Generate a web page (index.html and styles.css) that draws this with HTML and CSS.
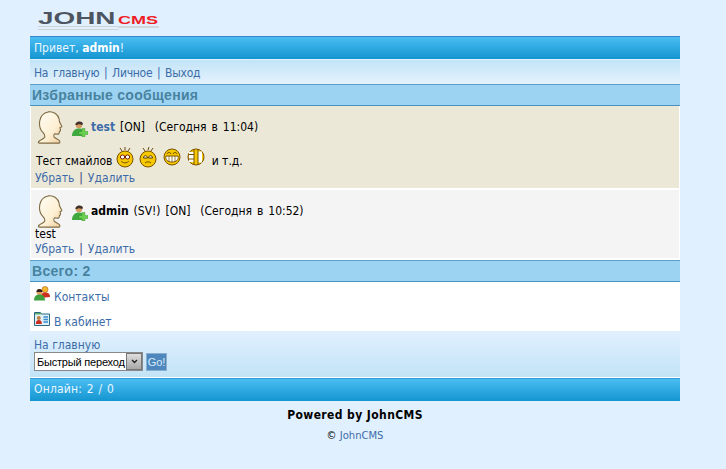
FILE: index.html
```html
<!DOCTYPE html>
<html lang="ru">

<head>
  <meta charset="UTF-8">
  <title>Избранные сообщения</title>
  <link rel="stylesheet" href="styles.css">
</head>

<body>
  <!-- shared icons -->
  <svg class="defs">
    <defs>
      <linearGradient id="skin" x1="0" y1="0" x2="1" y2="1">
        <stop offset="0" stop-color="#fffdf4"/>
        <stop offset="0.6" stop-color="#fdf0d4"/>
        <stop offset="1" stop-color="#f0c998"/>
      </linearGradient>
    </defs>
    <symbol id="avatar" viewBox="0 0 28 36">
      <path d="M12 1c6-1 11 3 12 8 0 2 0 3 1 4l2 4c0 1-1 1-2 1 0 2 1 3 0 4-1 0-1 1-1 2 0 2-3 1-5 1-1 1-1 3 0 4l5 3c1 1 1 3 0 3H3c-2 0-2-1-1-2 2-2 4-2 6-4 1-2 0-4-2-6C3 20 2 15 3 10c1-5 4-8 9-9z" fill="url(#skin)" stroke="#7d6a42" stroke-width="1.200"/>
    </symbol>
    <symbol id="user-on" viewBox="0 0 17 17">
      <circle cx="8" cy="5" r="3.300" fill="#d49a62"/>
      <path d="M4.500 5c-.5-4 7-5 7.500-1l-1 1c-2-1-4-1-5 0z" fill="#40302c"/>
      <path d="M1 16c0-5 3-7.500 7-7.500s6 2 6 7.500z" fill="#3fa83f"/>
      <path d="M11 8.500h3v3h3v3h-3v2.500h-3v-2.500H8v-3h3z" fill="#6dcf4e" stroke="#2f8f30" stroke-width=".4"/>
    </symbol>
  </svg>

  <div class="page">
    <div class="logo">
      <span class="logo-john">JOHN</span>
      <span class="logo-cms">CMS</span>
    </div>

    <div class="header">Привет, <b>admin</b>!</div>
    <div class="tmn">
      <a href="#">На главную</a> | <a href="#">Личное</a> | <a href="#">Выход</a>
    </div>

    <div class="phdr">Избранные сообщения</div>

    <div class="post post-odd">
      <div class="post-head">
        <svg class="avatar"><use href="#avatar"/></svg>
        <svg class="status"><use href="#user-on"/></svg>
        <span><a class="nick" href="#">test</a> [ON] &nbsp;(Сегодня в 11:04)</span>
      </div>
      <div class="post-text post-text-smile">
        Тест смайлов
        <svg class="smile" viewBox="0 0 18 22">
          <path d="M6 5L4 2M9 4V1M12 5l2-3" stroke="#6b4a10" fill="none"/>
          <circle cx="9" cy="13" r="8" fill="#f5c800" stroke="#7a5200"/>
          <ellipse cx="6.500" cy="11" rx="2.200" ry="2" fill="#fff" stroke="#7a1a1a"/>
          <ellipse cx="11.500" cy="11" rx="2.200" ry="2" fill="#fff" stroke="#7a1a1a"/>
          <path d="M5 15c2 2.500 6 2.500 8 0" stroke="#7a5200" fill="none"/>
        </svg>
        <svg class="smile" viewBox="0 0 18 22">
          <path d="M6 5L4 2M9 4l1-3M12 5l2-3" stroke="#6b4a10" fill="none"/>
          <circle cx="9" cy="13" r="8" fill="#f5c800" stroke="#7a5200"/>
          <path d="M4.500 12c0-3 4-3 4 0zM9.500 12c0-3 4-3 4 0z" stroke="#5a3a00" fill="#fff"/>
          <path d="M6 17c1.500-1.500 4.500-1.500 6 0" stroke="#7a5200" fill="none"/>
        </svg>
        <svg class="smile smile-round" viewBox="0 0 18 18">
          <circle cx="9" cy="9" r="8" fill="#f5c800" stroke="#7a5200"/>
          <path d="M4 6c1-2 3-2 4 0M10 6c1-2 3-2 4 0" stroke="#5a3a00" fill="none"/>
          <path d="M3 8h12c1 4-2 6-6 6s-7-2-6-6z" fill="#fff" stroke="#7a5200"/>
          <path d="M6 8v6M9 8v6M12 8v6" stroke="#7a5200" stroke-width=".7"/>
        </svg>
        <svg class="smile smile-round" viewBox="0 0 18 18">
          <circle cx="9" cy="9" r="8" fill="#f5c800" stroke="#7a5200"/>
          <path d="M2 4h5v10H2zM11 3.500h4v11h-4z" fill="#fff"/>
          <path d="M7 1.500v15M11 1.500v15M2 6.500h5M2 11h5" stroke="#7a5200" fill="none"/>
        </svg>
        и т.д.
      </div>
      <div class="post-links"><a href="#">Убрать</a> | <a href="#">Удалить</a></div>
    </div>

    <div class="post post-even">
      <div class="post-head">
        <svg class="avatar"><use href="#avatar"/></svg>
        <svg class="status"><use href="#user-on"/></svg>
        <span><b>admin</b> (SV!) [ON] &nbsp;(Сегодня в 10:52)</span>
      </div>
      <div class="post-text">test</div>
      <div class="post-links"><a href="#">Убрать</a> | <a href="#">Удалить</a></div>
    </div>

    <div class="phdr">Всего: 2</div>

    <div class="menu">
      <div class="menu-row">
        <svg class="menu-icon" viewBox="0 0 16 16">
          <circle cx="11" cy="3.500" r="3" fill="#f5b830" stroke="#a06010" stroke-width=".6"/>
          <path d="M7 12c0-4 1-5.500 4-5.500s5 1 5 4.500z" fill="#d03020"/>
          <circle cx="5.500" cy="6" r="3" fill="#e0a060"/>
          <path d="M2.500 6c-.5-4 6-4 6 0z" fill="#302020"/>
          <path d="M0 14.500c0-4 2-6 5.500-6s5.500 2 5.500 6z" fill="#40a040"/>
        </svg>
        <a href="#">Контакты</a>
      </div>
      <div class="menu-row">
        <svg class="menu-icon" viewBox="0 0 16 16">
          <path d="M.5 1.500h6l1 1.500h8v11.500H.5z" fill="#dff0f8" stroke="#2a6a80"/>
          <path d="M1 2h6v1.500H1z" fill="#60b060"/>
          <circle cx="4.800" cy="7" r="2" fill="#c08040"/>
          <path d="M1.800 13c0-3 1-4 3-4s3 1 3 4z" fill="#c83020"/>
          <path d="M9.500 6h4.500M9.500 8.500h4.500M9.500 11h4.500" stroke="#3a8ad0" stroke-width="1.400"/>
        </svg>
        <a href="#">В кабинет</a>
      </div>
    </div>

    <div class="bottom">
      <a href="#">На главную</a>
      <form class="jump">
        <div class="jump-select">
          <span class="jump-value">Быстрый переход</span>
          <span class="jump-arrow">
            <svg viewBox="0 0 7 5" class="jump-chevron"><path d="M1 1l2.500 2.500L6 1" fill="none" stroke="#222" stroke-width="1.400"/></svg>
          </span>
        </div>
        <button class="jump-go" type="button">Go!</button>
      </form>
    </div>

    <div class="footer">Онлайн: 2 / 0</div>

    <div class="powered">Powered by JohnCMS</div>
    <div class="copy">© <a href="#">JohnCMS</a></div>
  </div>
</body>

</html>
```

FILE: styles.css
```css
body {
  margin: 0;
  background-color: #e1f0fe;
  font-family: "DejaVu Sans Condensed", "DejaVu Sans", sans-serif;
  font-stretch: condensed;
  font-size: 12px;
  color: #000;
}

a {
  color: #3c6ca8;
  text-decoration: none;
}

.defs {
  display: block;
  width: 0;
  height: 0;
}

.page {
  width: 650px;
  margin-left: 30px;
}

.logo {
  height: 36px;
  padding: 10px 0 0 8px;
  box-sizing: border-box;
  display: flex;
  font-family: "Liberation Sans", Arial, sans-serif;
  font-stretch: normal;
  font-weight: bold;
}

.logo-john,
.logo-cms {
  display: inline-block;
  transform-origin: left top;
  transform: scaleX(1.64);
}

.logo-john {
  width: 49px;
  height: 16px;
  color: #4d5560;
  font-size: 17px;
  line-height: 17px;
  border-bottom: 4px double #cfd2d5;
}

.logo-cms {
  width: 25px;
  height: 16px;
  margin-left: 31px;
  color: #ee1c25;
  font-size: 11px;
  line-height: 20px;
  border-bottom: 2px solid #d3d6d8;
}

.header,
.footer {
  height: 22px;
  line-height: 23px;
  padding-left: 4px;
  color: #eaf6ff;
  background: linear-gradient(#4abdf2, #1495d0);
  border-top: 1px solid #3a85c8;
}

.header b {
  color: #fff;
}

.footer {
  line-height: 21px;
  word-spacing: 1px;
  letter-spacing: 0.2px;
  border-top-color: #2f9fdc;
}

.tmn {
  height: 24px;
  line-height: 26px;
  padding-left: 4px;
  margin-top: 1px;
  background: linear-gradient(#c2e4f7, #e4f2fd);
  color: #3c6ca8;
  word-spacing: 1.500px;
  letter-spacing: -0.25px;
}

.phdr {
  height: 20px;
  line-height: 20px;
  padding-left: 2px;
  background-color: #9dd3f2;
  border-top: 1px solid #5d9ec8;
  border-bottom: 1px solid #4a90c0;
  color: #47829f;
  font-family: "Liberation Sans", Arial, sans-serif;
  font-stretch: normal;
  font-size: 14px;
  letter-spacing: 0.3px;
  font-weight: bold;
}

.post {
  padding-left: 5px;
  border-left: 1px solid #fff;
  border-right: 1px solid #fff;
  border-bottom: 2px solid #fff;
}

.post-odd {
  height: 82px;
  background-color: #ece8d8;
}

.post-even {
  height: 68px;
  background-color: #f4f4f4;
}

.post-even .post-head {
  margin-bottom: -3px;
}

.post-head {
  display: flex;
  align-items: center;
  height: 38px;
  padding-top: 2px;
  word-spacing: 1.500px;
}

.avatar {
  width: 26px;
  height: 33px;
  margin: 0 8px 0 1px;
  flex: none;
}

.status {
  width: 17px;
  height: 17px;
  margin-right: 3px;
  margin-top: 3px;
  flex: none;
}

.nick {
  font-weight: bold;
}

.post-text {
  height: 15px;
  line-height: 15px;
  margin-left: -1px;
}

.post-text-smile {
  height: 25px;
  line-height: 28px;
  margin-left: 0;
  white-space: nowrap;
}

.smile {
  width: 18px;
  height: 22px;
  margin-right: 2px;
  vertical-align: -3px;
}

.smile-round {
  height: 18px;
  margin-right: 3px;
  vertical-align: -1px;
}

.post-links {
  height: 15px;
  line-height: 15px;
  margin-left: -1px;
  color: #3a3a78;
  word-spacing: 1.500px;
}

.menu {
  background-color: #fff;
  padding: 3px 4px 0;
  height: 46px;
}

.menu-row {
  height: 25px;
  display: flex;
  align-items: flex-start;
  line-height: 24px;
}

.menu-icon {
  width: 16px;
  height: 16px;
  margin-right: 4px;
  margin-top: 1px;
}

.bottom {
  height: 46px;
  padding: 6px 4px 0;
  box-sizing: border-box;
  background: linear-gradient(#e1f0fe, #c2e4f7);
  border-bottom: 1px solid #fff;
  line-height: 14px;
  margin-top: 1px;
}

.jump {
  display: flex;
  align-items: center;
  gap: 3px;
}

.jump-select {
  display: flex;
  align-items: center;
  width: 109px;
  height: 19px;
  box-sizing: border-box;
  background: #fff;
  border: 1px solid #888;
}

.jump-value {
  flex: 1;
  padding-left: 2px;
  font-family: "Liberation Sans", Arial, sans-serif;
  font-stretch: normal;
  font-size: 11px;
  letter-spacing: -0.2px;
  white-space: nowrap;
  overflow: hidden;
}

.jump-arrow {
  width: 16px;
  height: 17px;
  flex: none;
  display: flex;
  align-items: center;
  justify-content: center;
  background: linear-gradient(#dedede, #a8a8a8);
  border: 1px solid #777;
  box-sizing: border-box;
}

.jump-chevron {
  width: 7px;
  height: 5px;
}

.jump-go {
  width: 21px;
  height: 18px;
  padding: 0;
  border: 1px solid #8ab0d0;
  background-color: #4d87bd;
  color: #d8ecfa;
  font-family: "Liberation Sans", Arial, sans-serif;
  font-stretch: normal;
  font-size: 11px;
}

.powered {
  margin-top: 6px;
  text-align: center;
  font-weight: bold;
  line-height: 16px;
  letter-spacing: 0.4px;
}

.copy {
  margin-top: 6px;
  text-align: center;
  font-family: "DejaVu Sans", sans-serif;
  font-stretch: normal;
  font-size: 10px;
  line-height: 14px;
}
```
